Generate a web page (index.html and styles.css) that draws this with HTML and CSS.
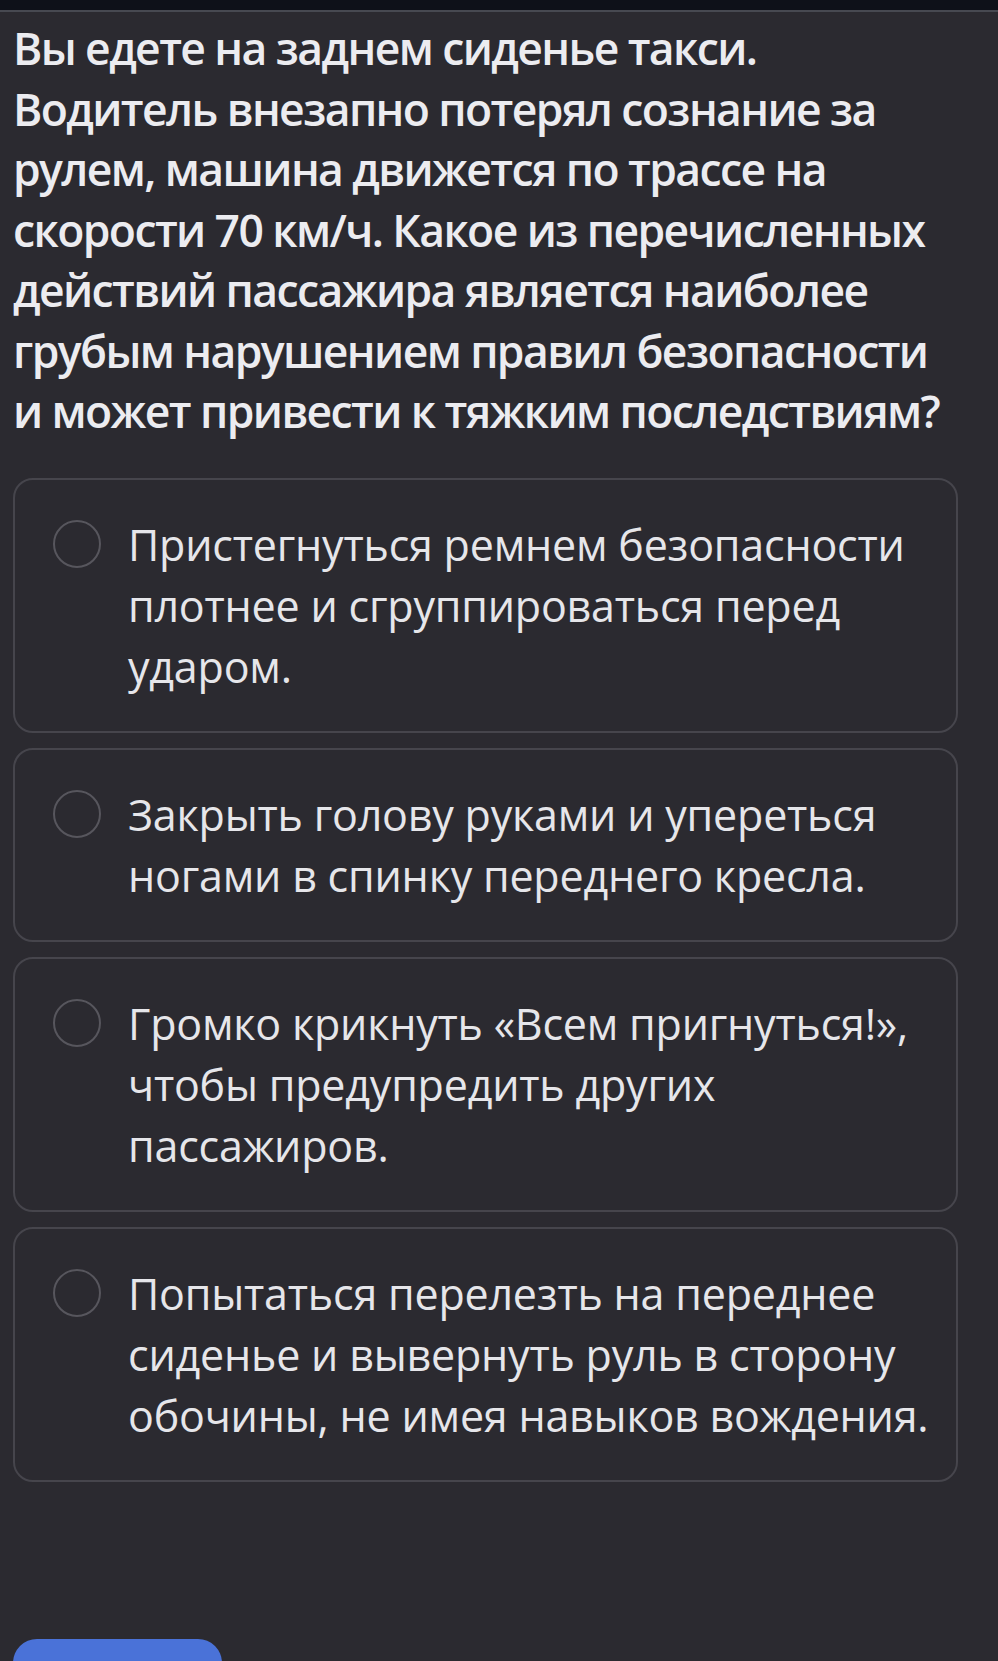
FILE: index.html
```html
<!DOCTYPE html>
<html lang="ru">
<head>
  <meta charset="UTF-8">
  <meta name="viewport" content="width=device-width, initial-scale=1.0">
  <title>Вопрос</title>
  <link rel="stylesheet" href="styles.css">
</head>
<body>
  <div class="topbar"></div>
  <div class="page">
    <h1 class="question">Вы едете на заднем сиденье такси.<br>
      Водитель внезапно потерял сознание за<br>
      рулем, машина движется по трассе на<br>
      скорости 70 км/ч. Какое из перечисленных<br>
      действий пассажира является наиболее<br>
      грубым нарушением правил безопасности<br>
      и может привести к тяжким последствиям?</h1>

    <div class="options">
      <label class="option">
        <span class="radio"></span>
        <span class="option-text">Пристегнуться ремнем безопасности плотнее и сгруппироваться перед ударом.</span>
      </label>
      <label class="option">
        <span class="radio"></span>
        <span class="option-text">Закрыть голову руками и упереться ногами в спинку переднего кресла.</span>
      </label>
      <label class="option">
        <span class="radio"></span>
        <span class="option-text">Громко крикнуть «Всем пригнуться!», чтобы предупредить других пассажиров.</span>
      </label>
      <label class="option">
        <span class="radio"></span>
        <span class="option-text">Попытаться перелезть на переднее сиденье и вывернуть руль в сторону обочины, не имея навыков вождения.</span>
      </label>
    </div>

    <button class="submit"></button>
  </div>
</body>
</html>
```

FILE: styles.css
```css
body {
  margin: 0;
  padding: 0;
  background: #2b2a30;
  font-family: "Open Sans", "Noto Sans", sans-serif;
  color: #e9e9ee;
  overflow: hidden;
  height: 1661px;
}

.topbar {
  height: 10px;
  background: #0e1119;
  border-bottom: 2px solid #474951;
}

.page {
  padding: 6px 40px 0 13px;
}

.question {
  margin: 0;
  font-size: 44.5px;
  line-height: 60.5px;
  font-weight: 600;
  letter-spacing: -1.6px;
  white-space: nowrap;
  color: #ececf0;
}

.options {
  display: flex;
  flex-direction: column;
  gap: 15px;
  margin-top: 36px;
}

.option {
  display: flex;
  align-items: flex-start;
  gap: 27px;
  padding: 34px 8px 34px 38px;
  border: 2px solid #46454c;
  border-radius: 20px;
}

.radio {
  flex: none;
  width: 44px;
  height: 44px;
  margin-top: 6px;
  border: 2.5px solid #57565d;
  border-radius: 50%;
}

.option-text {
  font-size: 43px;
  line-height: 61px;
  letter-spacing: -0.2px;
  color: #e6e6ea;
}

.submit {
  display: block;
  margin-top: 157px;
  width: 209px;
  height: 60px;
  border: none;
  border-radius: 24px;
  background: #4a72d8;
}
```
